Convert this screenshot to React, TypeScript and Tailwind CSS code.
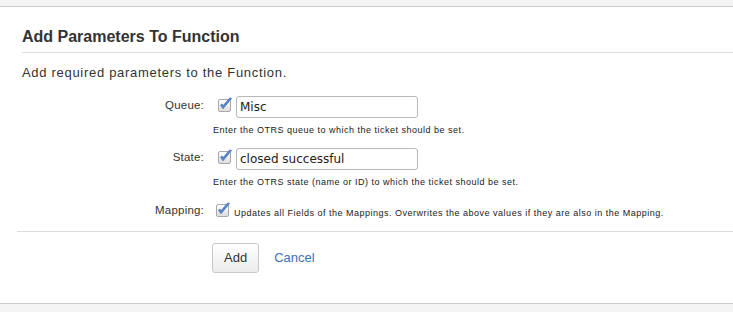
import React from 'react';

function CheckIcon() {
    return (
        <svg width="16" height="15" viewBox="0 0 16 15" className="block">
            <defs>
                <linearGradient id="boxg" x1="0" y1="0" x2="0" y2="1">
                    <stop offset="0" stopColor="#ffffff" />
                    <stop offset="1" stopColor="#dcdcdc" />
                </linearGradient>
                <linearGradient id="chk" x1="0" y1="0" x2="1" y2="1">
                    <stop offset="0" stopColor="#8ab4e8" />
                    <stop offset="1" stopColor="#2a62b8" />
                </linearGradient>
            </defs>
            <rect x="1.5" y="2.5" width="12" height="12" rx="1.5" fill="url(#boxg)" stroke="#a9a9a9" />
            <path d="M3.5 8.2 L6 11.8 L14.6 1.4 L12.6 0.9 L6.2 8.6 L5 7 Z" fill="url(#chk)" stroke="#2a5ea8" strokeWidth="0.6" strokeLinejoin="round" />
        </svg>
    );
}

const helpCls = 'text-[9px] leading-[11px] tracking-[0.5px] text-[#1a1a1a]';

function Field({ label, value, help }: { label: string; value: string; help: string }) {
    return (
        <div className="flex items-start">
            <div className="w-[182px] text-right text-[11.5px] leading-[18px] tracking-[0.2px] text-[#333]">{label}</div>
            <div className="ml-[9px]">
                <div className="flex items-start">
                    <div className="ml-[4px] pt-[1px]">
                        <CheckIcon />
                    </div>
                    <div className="ml-[3px] w-[182px] h-[22px] border border-[#b8b8b8] rounded-[3px] bg-white px-[3px] flex items-center text-[12px] text-[#222] font-['DejaVu_Sans',sans-serif]">
                        {value}
                    </div>
                </div>
                <div className={`mt-[7px] ${helpCls}`}>{help}</div>
            </div>
        </div>
    );
}

export default function App() {
    return (
        <div className="w-[733px] h-[312px] bg-white font-['Liberation_Sans',Arial,sans-serif] overflow-hidden">
            <div className="h-[7px] bg-[#f4f4f4] border-b border-[#cccccc]" />
            <div className="pl-[22px] pt-[20px]">
                <h2 className="text-[16px] leading-[20px] font-bold text-[#333] pb-[5px] border-b border-[#dddddd]">
                    Add Parameters To Function
                </h2>
            </div>
            <div className="pl-[22px] mt-[12px] text-[13px] leading-[16px] text-[#333] tracking-[0.7px]">
                Add required parameters to the Function.
            </div>
            <div className="pl-[22px] mt-[15px] flex flex-col gap-[12px]">
                <Field label="Queue:" value="Misc" help="Enter the OTRS queue to which the ticket should be set." />
                <Field label="State:" value="closed successful" help="Enter the OTRS state (name or ID) to which the ticket should be set." />
                <div className="flex items-start mt-[1px]">
                    <div className="w-[182px] text-right text-[11.5px] leading-[18px] tracking-[0.2px] text-[#333]">Mapping:</div>
                    <div className="ml-[11px] pt-[1px]">
                        <CheckIcon />
                    </div>
                    <div className={`ml-[3px] pt-[7px] ${helpCls}`}>
                        Updates all Fields of the Mappings. Overwrites the above values if they are also in the Mapping.
                    </div>
                </div>
            </div>
            <div className="ml-[17px] mt-[12px] border-t border-[#dddddd]" />
            <div className="pl-[212px] mt-[11px] flex items-center gap-[15px]">
                <button className="h-[30px] px-[11px] border border-[#c8c8c8] rounded-[3px] bg-gradient-to-b from-[#ffffff] to-[#ececec] text-[13px] text-[#333]">
                    Add
                </button>
                <a className="text-[13px] text-[#3a72b5] cursor-pointer">Cancel</a>
            </div>
            <div className="mt-[30px] h-[10px] bg-[#f4f4f4] border-t border-[#cccccc]" />
        </div>
    );
}
